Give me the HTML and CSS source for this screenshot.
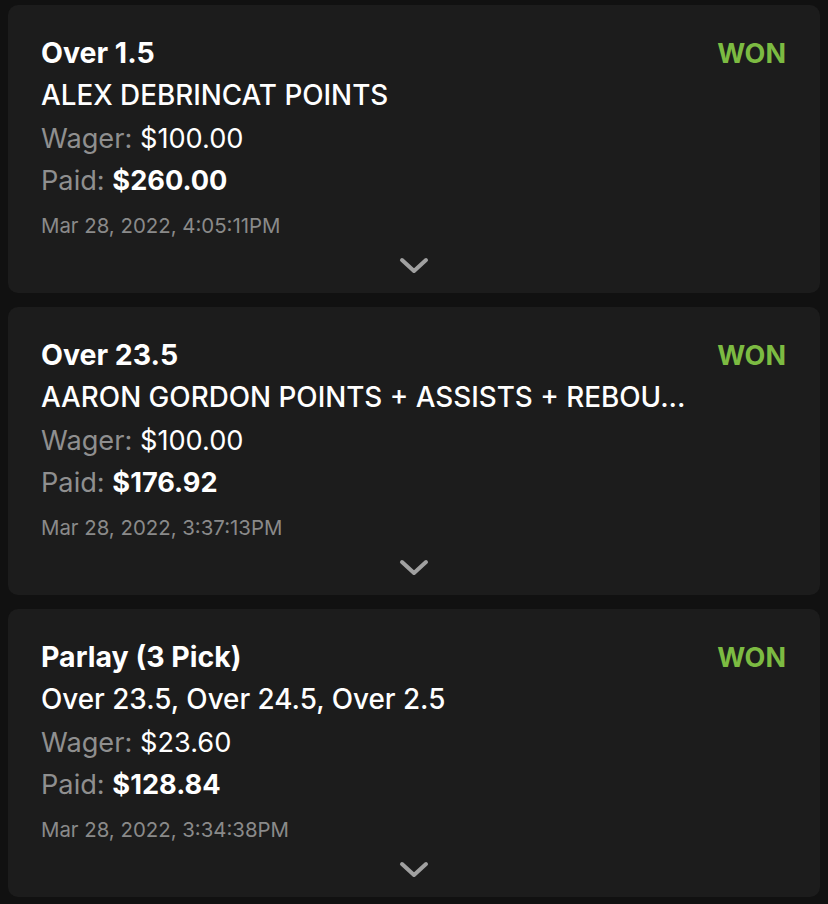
FILE: index.html
```html
<!DOCTYPE html>
<html>
<head>
<meta charset="utf-8">
<link rel="stylesheet" href="styles.css">
</head>
<body>
<div class="list">
  <div class="card">
    <div class="top">
      <div class="title">Over 1.5</div>
      <div class="status">WON</div>
    </div>
    <div class="name">ALEX DEBRINCAT POINTS</div>
    <div class="row first"><span class="label">Wager:</span> <span class="val">$100.00</span></div>
    <div class="row"><span class="label">Paid:</span> <span class="val bold">$260.00</span></div>
    <div class="date">Mar 28, 2022, 4:05:11PM</div>
    <div class="chev"><svg width="30" height="18" viewBox="0 0 30 18"><polyline points="3,3 15,14 27,3" fill="none" stroke="#a0a0a0" stroke-width="4" stroke-linecap="round" stroke-linejoin="round"/></svg></div>
  </div>
  <div class="card">
    <div class="top">
      <div class="title">Over 23.5</div>
      <div class="status">WON</div>
    </div>
    <div class="name">AARON GORDON POINTS + ASSISTS + REBOU...</div>
    <div class="row first"><span class="label">Wager:</span> <span class="val">$100.00</span></div>
    <div class="row"><span class="label">Paid:</span> <span class="val bold">$176.92</span></div>
    <div class="date">Mar 28, 2022, 3:37:13PM</div>
    <div class="chev"><svg width="30" height="18" viewBox="0 0 30 18"><polyline points="3,3 15,14 27,3" fill="none" stroke="#a0a0a0" stroke-width="4" stroke-linecap="round" stroke-linejoin="round"/></svg></div>
  </div>
  <div class="card">
    <div class="top">
      <div class="title">Parlay (3 Pick)</div>
      <div class="status">WON</div>
    </div>
    <div class="name">Over 23.5, Over 24.5, Over 2.5</div>
    <div class="row first"><span class="label">Wager:</span> <span class="val">$23.60</span></div>
    <div class="row"><span class="label">Paid:</span> <span class="val bold">$128.84</span></div>
    <div class="date">Mar 28, 2022, 3:34:38PM</div>
    <div class="chev"><svg width="30" height="18" viewBox="0 0 30 18"><polyline points="3,3 15,14 27,3" fill="none" stroke="#a0a0a0" stroke-width="4" stroke-linecap="round" stroke-linejoin="round"/></svg></div>
  </div>
</div>
</body>
</html>
```
FILE: styles.css
```css
html, body {
  margin: 0;
  padding: 0;
  background: #111111;
  font-family: Inter, "Liberation Sans", sans-serif;
  color: #ffffff;
}
.list {
  display: flex;
  flex-direction: column;
  gap: 14px;
  padding: 5px 8px;
}
.card {
  background: #1c1c1c;
  border-radius: 10px;
  height: 288px;
  box-sizing: border-box;
  padding: 27px 34px 0 33px;
  display: flex;
  flex-direction: column;
}
.top {
  display: flex;
  justify-content: space-between;
  align-items: baseline;
  height: 42px;
  line-height: 42px;
}
.title {
  font-size: 28.5px;
  font-weight: 700;
}
.status {
  font-size: 27px;
  font-weight: 700;
  color: #7cbb42;
}
.name {
  font-size: 27.8px;
  font-weight: 500;
  line-height: 42px;
  white-space: nowrap;
}
.row {
  font-size: 27.2px;
  line-height: 42px;
}
.row.first {
  margin-top: 2px;
}
.label {
  color: #8f8f8f;
}
.val {
  color: #ffffff;
}
.bold {
  font-weight: 700;
}
.date {
  font-size: 20.4px;
  color: #8a8a8a;
  line-height: 42px;
  margin-top: 3px;
}
.chev {
  display: flex;
  justify-content: center;
  margin-top: 10px;
}
```
